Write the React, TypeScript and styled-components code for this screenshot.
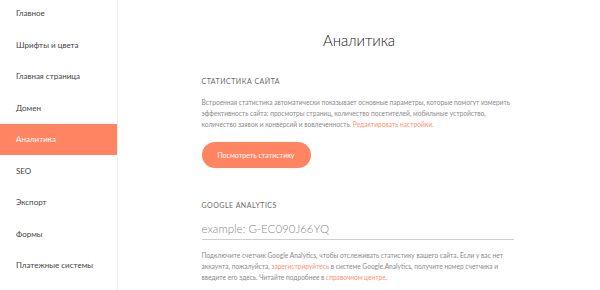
import styled, { createGlobalStyle } from 'styled-components';

const Global = createGlobalStyle`
  html, body {
    margin: 0;
    padding: 0;
    background: #fff;
    font-family: 'Lato', 'Noto Sans', sans-serif;
  }
`;

const Page = styled.div`
  display: flex;
  width: 600px;
  height: 290px;
  overflow: hidden;
`;

const Sidebar = styled.nav`
  width: 117px;
  flex-shrink: 0;
  border-right: 1px solid #ececec;
  display: flex;
  flex-direction: column;
  margin-top: -2.5px;
`;

const NavItem = styled.div<{ $active?: boolean }>`
  height: 31.5px;
  display: flex;
  align-items: center;
  padding-left: 16px;
  font-size: 8px;
  color: ${({ $active }) => ($active ? '#fff' : '#444')};
  background: ${({ $active }) => ($active ? '#ff8562' : 'transparent')};
`;

const Main = styled.main`
  flex: 1;
  display: flex;
  flex-direction: column;
  align-items: center;
`;

const Title = styled.h1`
  margin: 31px 0 0;
  font-size: 15px;
  font-weight: 300;
  letter-spacing: -0.1px;
  color: #222;
  line-height: 18px;
`;

const Column = styled.div`
  width: 312px;
  margin-left: -3px;
  display: flex;
  flex-direction: column;
  align-items: flex-start;
`;

const SectionTitle = styled.div<{ $top: number }>`
  margin-top: ${({ $top }) => $top}px;
  font-size: 7px;
  letter-spacing: 0.5px;
  color: #6a6a6a;
  line-height: 10px;
`;

const Text = styled.p<{ $top: number }>`
  margin: ${({ $top }) => $top}px 0 0;
  font-size: 6.6px;
  line-height: 11px;
  color: #8a8a8a;
`;

const Link = styled.span`
  color: #ff8f70;
`;

const Button = styled.button`
  margin-top: 12px;
  height: 26px;
  width: 109px;
  border: none;
  border-radius: 13px;
  background: #ff8562;
  color: #fff;
  font-family: inherit;
  font-size: 7px;
  padding: 0;
`;

const Input = styled.div`
  margin-top: 8px;
  width: 100%;
  box-sizing: border-box;
  height: 22px;
  border-bottom: 1px solid #cfcfcf;
  font-size: 11.5px;
  font-weight: 300;
  color: #888;
  display: flex;
  align-items: center;
`;

const items = [
  'Главное',
  'Шрифты и цвета',
  'Главная страница',
  'Домен',
  'Аналитика',
  'SEO',
  'Экспорт',
  'Формы',
  'Платежные системы',
];

export default function App() {
  return (
    <Page>
      <Global />
      <Sidebar>
        {items.map((t) => (
          <NavItem key={t} $active={t === 'Аналитика'}>
            {t}
          </NavItem>
        ))}
      </Sidebar>
      <Main>
        <Title>Аналитика</Title>
        <Column>
          <SectionTitle $top={27}>СТАТИСТИКА САЙТА</SectionTitle>
          <Text $top={11}>
            Встроенная статистика автоматически показывает основные параметры, которые помогут измерить
            эффективность сайта: просмотры страниц, количество посетителей, мобильные устройство,
            количество заявок и конверсий и вовлеченность. <Link>Редактировать настройки.</Link>
          </Text>
          <Button>Посмотреть статистику</Button>
          <SectionTitle $top={32}>GOOGLE ANALYTICS</SectionTitle>
          <Input>example: G-EC090J66YQ</Input>
          <Text $top={10}>
            Подключите счетчик Google Analytics, чтобы отслеживать статистику вашего сайта. Если у вас нет
            аккаунта, пожалуйста, <Link>зарегистрируйтесь</Link> в системе Google.Analytics, получите номер счетчика и
            введите его здесь. Читайте подробнее в <Link>справочном центре</Link>.
          </Text>
        </Column>
      </Main>
    </Page>
  );
}
